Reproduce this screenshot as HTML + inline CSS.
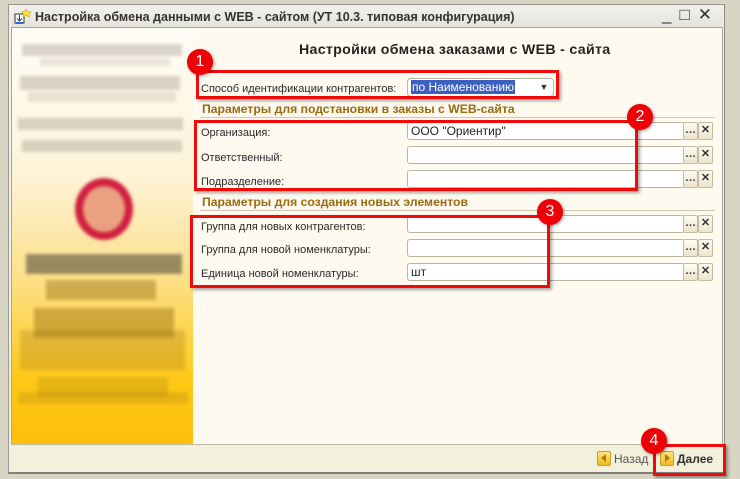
<!DOCTYPE html>
<html><head><meta charset="utf-8"><style>
*{margin:0;padding:0;box-sizing:border-box}
body{width:740px;height:479px;background:#d8d5c4;position:relative;overflow:hidden;font-family:"Liberation Sans",Arial,sans-serif;font-size:12px;color:#222}
.a{position:absolute}
.win{left:8px;top:4px;width:717px;height:470px;background:#f1f0ea;border:1px solid #9c9a90;border-right-color:#8a887e;border-bottom:2px solid #807e76}
.title{left:11px;top:5px;width:712px;height:23px;background:linear-gradient(#f2f1ec,#e4e2da)}
.body{left:11px;top:27px;width:712px;height:418px;background:#fefaf0;border:1px solid #a8a69c;border-bottom:none}
.left{left:12px;top:28px;width:181px;height:416px;background:linear-gradient(#fffdf7 0%,#fdf3d8 35%,#fde08a 60%,#fec814 85%,#ffc010 100%)}
.foot{left:11px;top:444px;width:712px;height:28px;background:#f3f0dc;border-top:1px solid #bbb8a8}
.lbl{font-size:11px;color:#2a2a2a;white-space:nowrap;margin-top:2px}
.sec{font-weight:bold;color:#9a6a10;font-size:12.2px;white-space:nowrap}
.line{height:1px;background:#cfc8b0}
.fld{height:18px;background:#fff;border:1px solid #b9b4a0;border-radius:3px;font-size:12px;padding:2px 3px;line-height:12px}
.btn{width:15px;height:18px;border:1px solid #c2bca4;background:linear-gradient(#fdfbf2,#ece5cc);border-radius:2px;font-size:11px;text-align:center;line-height:15px;color:#333;font-weight:bold}
.box{border:3px solid #f00a0a;box-shadow:2px 2px 3px rgba(0,0,0,.35)}
.badge{width:26px;height:26px;border-radius:50%;background:#ee0008;color:#fff;font-size:16px;text-align:center;line-height:26px;box-shadow:1px 1px 3px rgba(0,0,0,.4)}
.blk{background:rgba(150,140,130,.35);filter:blur(1.5px)}
.yb{background:rgba(150,110,20,.45);filter:blur(1.5px)}
</style></head><body>
<div class="a win"></div>
<div class="a title"></div>
<svg class="a" style="left:14px;top:8px" width="18" height="18" viewBox="0 0 18 18"><rect x="1" y="6" width="9" height="9" fill="#fff" stroke="#333"/><path d="M5.5 7v6M3 10.5l2.5 2.5 2.5-2.5" stroke="#246" fill="none"/><rect x="2" y="14" width="7" height="2" fill="#36c"/><path d="M12 1l2 2.5 3 .5-2 2 .5 3-3.5-1.5-3 1.5.5-3-2-2 3-.5z" fill="#fd4" stroke="#ca0" stroke-width=".6"/></svg>
<div class="a" style="left:35px;top:10px;font-size:12.5px;font-weight:bold;color:#333">Настройка обмена данными с WEB - сайтом (УТ 10.3. типовая конфигурация)</div>
<div class="a" style="left:662px;top:5px;font-size:17px;color:#333;letter-spacing:8px">_□✕</div>
<div class="a body"></div>
<div class="a left"></div>
<div class="a blk" style="left:22px;top:44px;width:160px;height:12px"></div>
<div class="a blk" style="left:40px;top:58px;width:130px;height:8px;opacity:.6"></div>
<div class="a blk" style="left:20px;top:76px;width:160px;height:14px"></div>
<div class="a blk" style="left:28px;top:92px;width:148px;height:10px;opacity:.6"></div>
<div class="a blk" style="left:18px;top:118px;width:165px;height:12px"></div>
<div class="a blk" style="left:22px;top:140px;width:160px;height:12px"></div>
<div class="a" style="left:75px;top:178px;width:58px;height:62px;border-radius:50%;border:8px solid #d02040;background:#eba080;filter:blur(1.5px)"></div>
<div class="a yb" style="left:26px;top:254px;width:156px;height:20px;background:rgba(90,80,60,.6)"></div>
<div class="a yb" style="left:46px;top:280px;width:110px;height:20px"></div>
<div class="a yb" style="left:34px;top:308px;width:140px;height:30px"></div>
<div class="a yb" style="left:20px;top:330px;width:165px;height:40px;opacity:.6"></div>
<div class="a yb" style="left:38px;top:377px;width:130px;height:20px;opacity:.5"></div>
<div class="a yb" style="left:18px;top:392px;width:170px;height:12px;opacity:.5"></div>

<div class="a" style="left:299px;top:42px;font-size:14.2px;font-weight:bold;color:#222;letter-spacing:.3px;white-space:nowrap">Настройки обмена заказами с WEB - сайта</div>

<div class="a lbl" style="left:201px;top:81px">Способ идентификации контрагентов:</div>
<div class="a fld" style="left:407px;top:78px;width:147px;height:19px;border-radius:4px"><span style="background:#3d5fbf;color:#fff;padding:0 1px">по Наименованию</span></div>
<div class="a btn" style="left:536px;top:80px;width:16px;height:15px;border:none;background:none;line-height:14px;font-size:9px">▼</div>

<div class="a sec" style="left:202px;top:102px">Параметры для подстановки в заказы с WEB-сайта</div>
<div class="a line" style="left:200px;top:117px;width:515px"></div>
<div class="a lbl" style="left:201px;top:125px">Организация:</div>
<div class="a lbl" style="left:201px;top:150px">Ответственный:</div>
<div class="a lbl" style="left:201px;top:174px">Подразделение:</div>
<div class="a fld" style="left:407px;top:122px;width:278px">ООО "Ориентир"</div>
<div class="a fld" style="left:407px;top:146px;width:278px"></div>
<div class="a fld" style="left:407px;top:170px;width:278px"></div>

<div class="a sec" style="left:202px;top:195px">Параметры для создания новых элементов</div>
<div class="a line" style="left:200px;top:210px;width:515px"></div>
<div class="a lbl" style="left:201px;top:219px">Группа для новых контрагентов:</div>
<div class="a lbl" style="left:201px;top:242px">Группа для новой номенклатуры:</div>
<div class="a lbl" style="left:201px;top:266px">Единица новой номенклатуры:</div>
<div class="a fld" style="left:407px;top:215px;width:278px"></div>
<div class="a fld" style="left:407px;top:239px;width:278px"></div>
<div class="a fld" style="left:407px;top:263px;width:278px">шт</div>

<div class="a btn" style="left:683px;top:122px">…</div><div class="a btn" style="left:698px;top:122px">✕</div>
<div class="a btn" style="left:683px;top:146px">…</div><div class="a btn" style="left:698px;top:146px">✕</div>
<div class="a btn" style="left:683px;top:170px">…</div><div class="a btn" style="left:698px;top:170px">✕</div>
<div class="a btn" style="left:683px;top:215px">…</div><div class="a btn" style="left:698px;top:215px">✕</div>
<div class="a btn" style="left:683px;top:239px">…</div><div class="a btn" style="left:698px;top:239px">✕</div>
<div class="a btn" style="left:683px;top:263px">…</div><div class="a btn" style="left:698px;top:263px">✕</div>

<div class="a foot"></div>
<div class="a" style="left:597px;top:451px;width:14px;height:15px;background:linear-gradient(#ffe680,#f0b820);border:1px solid #c9a030;border-radius:2px"></div>
<div class="a" style="left:601px;top:454px;width:0;height:0;border:4.5px solid transparent;border-right:5px solid #b07a10;border-left:none"></div>
<div class="a" style="left:614px;top:452px;color:#555">Назад</div>
<div class="a" style="left:660px;top:451px;width:14px;height:15px;background:linear-gradient(#ffe680,#f0b820);border:1px solid #c9a030;border-radius:2px"></div>
<div class="a" style="left:665px;top:454px;width:0;height:0;border:4.5px solid transparent;border-left:5px solid #b07a10;border-right:none"></div>
<div class="a" style="left:677px;top:452px;font-weight:bold;color:#333">Далее</div>

<div class="a box" style="left:196px;top:70px;width:363px;height:29px"></div>
<div class="a box" style="left:194px;top:120px;width:444px;height:71px"></div>
<div class="a box" style="left:190px;top:215px;width:360px;height:73px"></div>
<div class="a box" style="left:653px;top:444px;width:73px;height:32px"></div>
<div class="a badge" style="left:187px;top:49px">1</div>
<div class="a badge" style="left:627px;top:104px">2</div>
<div class="a badge" style="left:537px;top:199px">3</div>
<div class="a badge" style="left:641px;top:428px">4</div>
</body></html>
